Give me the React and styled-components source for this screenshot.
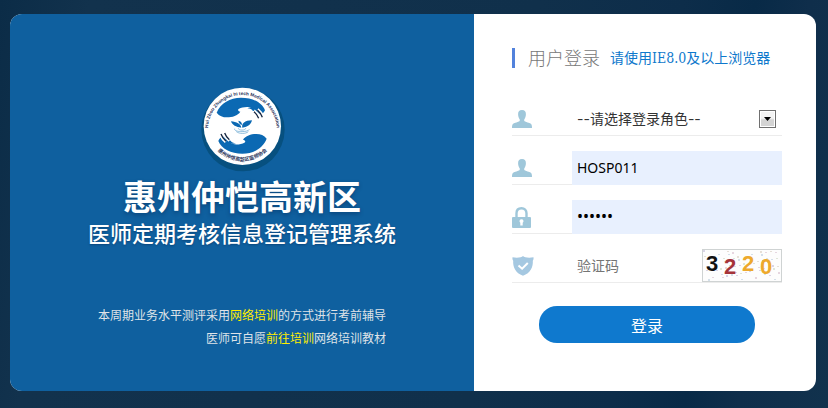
import React, { useState } from "react";
import styled, { createGlobalStyle } from "styled-components";

const GlobalStyle = createGlobalStyle`
  * {
    box-sizing: border-box;
  }
  body {
    margin: 0;
    background: #10304b;
    font-family: "Noto Sans", "Noto Sans CJK SC", sans-serif;
    font-size: 14px;
  }
`;

const Page = styled.main`
  display: flex;
  min-height: 100vh;
  padding: 14px 12px 17px 10px;
  background: linear-gradient(
    100deg,
    #0b2c47 0%,
    #12324d 10%,
    #10304b 60%,
    #0d2d4a 76%,
    #082a47 84%,
    #0f2e4b 90%,
    #11324d 100%
  );
`;

const Card = styled.div`
  display: grid;
  grid-template-columns: 464fr 342fr;
  flex: 1;
  border-radius: 12px;
  overflow: hidden;
  background: #fff;
`;

const BrandPanel = styled.section`
  display: flex;
  flex-direction: column;
  align-items: center;
  padding: 61px 20px 40px;
  background: #0f609f;
  color: #fff;
`;

const BrandName = styled.h1`
  margin: 0;
  font-size: 34px;
  line-height: 34px;
  font-weight: 700;
  text-shadow: 0 2px 4px rgba(0, 30, 70, 0.4);
`;

const SystemName = styled.h2`
  margin: 4px 0 0;
  font-size: 22px;
  line-height: 30px;
  font-weight: 500;
  text-shadow: 0 1px 2px rgba(0, 30, 70, 0.4);
`;

const Notes = styled.p`
  margin: 56px 0 0;
  font-size: 12px;
  line-height: 23px;
  text-align: right;
  color: #dfe3e8;
`;

const NoteLink = styled.a`
  color: #ffee00;
  text-decoration: none;
`;

const LoginPanel = styled.form`
  display: flex;
  flex-direction: column;
  padding: 34px 34px 40px 38px;
`;

const FormHeader = styled.header`
  display: flex;
  align-items: center;
  gap: 10px;
  height: 20px;
  margin-bottom: 34px;
  padding-left: 13px;
  border-left: 3px solid #5282dc;
`;

const FormTitle = styled.h3`
  margin: 0;
  font-size: 18px;
  line-height: 20px;
  font-weight: 300;
  color: #777;
`;

const BrowserLink = styled.a`
  font-family: "DejaVu Serif Condensed", "Liberation Serif", "Noto Sans CJK SC", serif;
  font-size: 14px;
  line-height: 20px;
  color: #0e78cc;
  text-decoration: none;
  white-space: nowrap;
`;

const Rows = styled.div`
  display: flex;
  flex-direction: column;
  gap: 15px;
`;

const Row = styled.div`
  position: relative;
  display: grid;
  grid-template-columns: 60px 1fr auto;
  height: 34px;
  box-shadow: inset 0 -1px #ececec;
`;

const RowLabel = styled.label`
  display: flex;
  align-items: center;
  color: ${(props) => props.$color || "#9fc7da"};
`;

const Field = styled.input`
  width: 100%;
  min-width: 0;
  padding: 0 5px 2px;
  border: 0;
  outline: 0;
  background: ${(props) => (props.$filled ? "#e8f0fe" : "transparent")};
  color: #000;
  font-family: inherit;
  font-size: ${(props) => (props.type === "password" ? "16px" : "14px")};

  &::placeholder {
    color: #757575;
    opacity: 1;
  }
`;

const RoleSelect = styled.select`
  appearance: none;
  width: 100%;
  padding: 0 30px 2px 5px;
  border: 0;
  outline: 0;
  background: transparent;
  color: #333;
  font-family: Inter, "Noto Sans CJK SC", sans-serif;
  font-size: 14px;
`;

const SelectArrow = styled.span`
  position: absolute;
  top: 8px;
  right: 6px;
  display: grid;
  place-items: center;
  width: 17px;
  height: 18px;
  border: 1px solid #707070;
  background: linear-gradient(#f3f3f3 45%, #d4d4d4 55%);
  box-shadow: inset 0 0 0 1px #fff;
  pointer-events: none;
`;

const LoginButton = styled.button`
  align-self: center;
  width: 80%;
  height: 37px;
  margin-top: 23px;
  border: 0;
  border-radius: 18px;
  background: #0f79ce;
  color: #fff;
  font-family: inherit;
  font-size: 16px;
  cursor: pointer;
`;

const UserIcon = () => (
  <svg width="20" height="18" viewBox="0 0 20 18" fill="currentColor" aria-hidden="true">
    <path d="M10 0c2.900 0 4 1.700 3.900 4.300 0 2.300-.7 3.700-1.500 4.900-.4.600-.3 1.500.2 2 1 .9 4.900 1.300 6.300 2.600.9.800 1.100 2.200 1.100 4.200H0c0-2 .2-3.400 1.100-4.200 1.400-1.300 5.300-1.700 6.300-2.600.5-.5.6-1.400.2-2C6.800 8 6.100 6.600 6.100 4.300 6 1.700 7.100 0 10 0z" />
  </svg>
);

const LockIcon = () => (
  <svg width="19" height="21" viewBox="0 0 19 21" aria-hidden="true">
    <path d="M4.500 11V6.300C4.500 3.200 6.500 1.300 9.500 1.300s5 1.900 5 5V11" fill="none" stroke="currentColor" strokeWidth="2.400" />
    <rect y="10" width="19" height="11" rx="1" fill="currentColor" />
    <path d="M9.500 12.200a2 2 0 0 1 1.200 3.600v2.700H8.300v-2.700a2 2 0 0 1 1.200-3.600z" fill="#fff" />
  </svg>
);

const ShieldIcon = () => (
  <svg width="22" height="20" viewBox="0 0 22 20" aria-hidden="true">
    <path d="M11 0c1.500 1.500 5.500 2.300 10.500 1.300.2 1.200 0 2.700-.7 3.400.5 6.300-2.300 12.300-9.800 15C3.500 17 .7 11 1.200 4.700.5 4 .3 2.500.5 1.300 5.500 2.300 9.500 1.500 11 0z" fill="currentColor" />
    <path d="M6.500 9.500l3.600 3.200 5.700-5.700" fill="none" stroke="#fff" strokeWidth="2" />
  </svg>
);

const Hand = ({ transform }) => (
  <g transform={transform}>
    <path
      d="M80 113C92 84 120 68 153 68c34 0 63 14 72 38-3 7-8 11-13 14-5-4-12-10-24-13-2-4-8-7-16-7 6-3 12-3 17-1-14-6-33-3-42 2-5 3-3 7 4 9-8 12-24 17-40 17-13 0-23-4-31-14z"
      fill="#0b69b3"
    />
    <path d="M192 107c7 5 13 12 16 21m-5-25c8 6 13 14 17 23" fill="none" stroke="#fff" strokeWidth="8" />
    <path d="M192 110c6 5 11 12 14 20m-4-25c7 6 12 14 15 22" fill="none" stroke="#14243f" strokeWidth="4" />
  </g>
);

const AssociationLogo = () => (
  <svg width="105" height="105" viewBox="0 0 315 315" role="img" aria-label="惠州仲恺高新区医师协会">
    <defs>
      <path id="arc-top" d="M54 176V163A103 103 0 0 1 260 163V176" />
      <path id="arc-bottom" d="M53 154A104 104 0 0 0 261 154" />
    </defs>
    <circle cx="159" cy="164" r="125" fill="#07507f" />
    <circle cx="157" cy="154" r="116" fill="#fff" />
    <Hand />
    <Hand transform="rotate(180 155 152)" />
    <path d="M154 158c-2-12-14-17-31-19 4 12 15 17 31 19zM157 158c-3-12 7-22 29-22-3 12-12 20-29 22zM145 137c7 1 11 5 11 13-6-2-10-6-11-13z" fill="#0b69b3" />
    <path d="M134 161c-4 11 40 12 44 2M145 160c0 7 22 7 22 0M139 170c9 7 28 7 36 0" fill="none" stroke="#5b9ecb" strokeWidth="2" />
    <text fontFamily="Liberation Sans, sans-serif" fontSize="14" fontWeight="700" fill="#26315a" textAnchor="middle">
      <textPath href="#arc-top" startOffset="50%">
        Hui Zhou Zhongkai hi tech Medical Association
      </textPath>
    </text>
    <text fontFamily="Noto Sans CJK SC, sans-serif" fontSize="15" fontWeight="700" fill="#26315a" textAnchor="middle">
      <textPath href="#arc-bottom" startOffset="50%">
        惠州仲恺高新区医师协会
      </textPath>
    </text>
  </svg>
);

const captchaDigits = [
  { digit: "3", x: 4, y: 22, color: "#111" },
  { digit: "2", x: 22, y: 25, color: "#a5343a" },
  { digit: "2", x: 40, y: 22, color: "#eda92c" },
  { digit: "0", x: 58, y: 25, color: "#eda92c" },
];

const noiseColors = ["#d9d4e6", "#dfe6d8", "#e6dfd6", "#d4e0ea", "#e6d6e0"];

const noise = Array.from({ length: 60 }, (_, i) => ({
  x: 1 + ((i * 37) % 76),
  y: 1 + ((i * 23 + Math.floor(i / 7) * 5) % 30),
  color: noiseColors[i % noiseColors.length],
}));

const Captcha = () => (
  <svg width="80" height="33" viewBox="0 0 80 33" role="img" aria-label="3220">
    <rect x="0.500" y="0.500" width="79" height="32" fill="#fdfdfd" stroke="#cfd3d3" />
    {noise.map((dot, i) => (
      <rect key={i} x={dot.x} y={dot.y} width="2" height={i % 3 ? 1 : 2} fill={dot.color} />
    ))}
    {captchaDigits.map(({ digit, x, y, color }) => (
      <text key={x} x={x} y={y} fill={color} fontFamily="Liberation Sans, sans-serif" fontSize="22" fontWeight="700">
        {digit}
      </text>
    ))}
  </svg>
);

const App = () => {
  const [form, setForm] = useState({ role: "", user: "HOSP011", password: "123456", code: "" });

  const handleChange = (e) => setForm({ ...form, [e.target.name]: e.target.value });

  return (
    <>
      <GlobalStyle />
      <Page>
        <Card>
          <BrandPanel>
            <AssociationLogo />
            <BrandName>惠州仲恺高新区</BrandName>
            <SystemName>医师定期考核信息登记管理系统</SystemName>
            <Notes>
              本周期业务水平测评采用<NoteLink href="#training">网络培训</NoteLink>的方式进行考前辅导
              <br />
              医师可自愿<NoteLink href="#training">前往培训</NoteLink>网络培训教材
            </Notes>
          </BrandPanel>

          <LoginPanel onSubmit={(e) => e.preventDefault()}>
            <FormHeader>
              <FormTitle>用户登录</FormTitle>
              <BrowserLink href="#browser">请使用IE8.0及以上浏览器</BrowserLink>
            </FormHeader>

            <Rows>
              <Row>
                <RowLabel htmlFor="role" aria-label="登录角色">
                  <UserIcon />
                </RowLabel>
                <RoleSelect id="role" name="role" value={form.role} onChange={handleChange}>
                  <option value="">--请选择登录角色--</option>
                </RoleSelect>
                <SelectArrow>
                  <svg width="7" height="4" viewBox="0 0 7 4" aria-hidden="true">
                    <path d="M0 0h7L3.500 4z" />
                  </svg>
                </SelectArrow>
              </Row>
              <Row>
                <RowLabel htmlFor="user" aria-label="用户名">
                  <UserIcon />
                </RowLabel>
                <Field id="user" name="user" value={form.user} onChange={handleChange} $filled />
              </Row>
              <Row>
                <RowLabel htmlFor="password" aria-label="密码">
                  <LockIcon />
                </RowLabel>
                <Field id="password" name="password" type="password" value={form.password} onChange={handleChange} $filled />
              </Row>
              <Row>
                <RowLabel htmlFor="code" aria-label="验证码" $color="#a5c8e1">
                  <ShieldIcon />
                </RowLabel>
                <Field id="code" name="code" placeholder="验证码" value={form.code} onChange={handleChange} />
                <Captcha />
              </Row>
            </Rows>

            <LoginButton type="submit">登录</LoginButton>
          </LoginPanel>
        </Card>
      </Page>
    </>
  );
};

export default App;
